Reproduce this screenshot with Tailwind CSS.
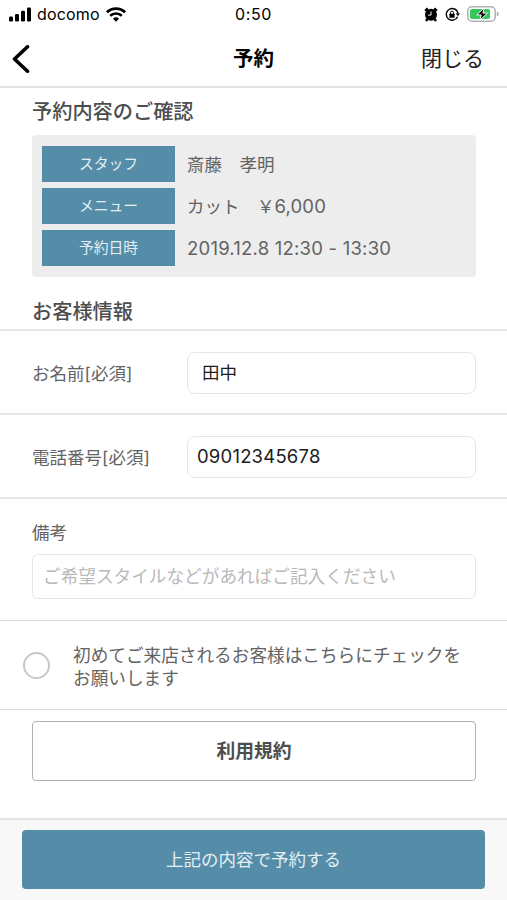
<!DOCTYPE html>
<html lang="ja">
<head>
<meta charset="utf-8">
<title>予約</title>
<script src="https://cdn.jsdelivr.net/npm/@tailwindcss/browser@4"></script>
</head>
<body class="w-[507px] h-[900px] overflow-hidden bg-white text-[#636363] font-[Inter,'Noto_Sans_CJK_JP',sans-serif] text-[17.5px] leading-6 flex flex-col">
  <div class="h-7 shrink-0 grid grid-cols-[1fr_auto_1fr] items-center text-black px-2 text-[16px] leading-7">
    <div class="flex items-center">
      <svg class="w-6 h-4" viewBox="0 0 24 16"><rect x="1" y="10.5" width="4" height="5" rx="1.2"/><rect x="7" y="8" width="4" height="7.5" rx="1.2"/><rect x="13" y="4.8" width="4" height="10.7" rx="1.2"/><rect x="19" y="1.5" width="4" height="14" rx="1.2"/></svg>
      <span class="ml-[5px] tracking-[0.15px]">docomo</span>
      <svg class="w-5 h-[15px] ml-[6px]" viewBox="0 0 20 15" fill="none" stroke="#000" stroke-width="2.6"><path d="M.9 5.3a13 13 0 0 1 18.2 0M4.2 8.8a8.3 8.3 0 0 1 11.6 0"/><path d="M10 14.7 7 11.8a4.3 4.3 0 0 1 6 0Z" fill="#000" stroke="none"/></svg>
    </div>
    <span class="tracking-[0.6px]">0:50</span>
    <div class="flex items-center justify-end">
      <svg class="w-[14px] h-[15px]" viewBox="0 0 14 15"><circle cx="7" cy="7.7" r="6"/><path d="M1.2 3.8 3.8 1.3M12.8 3.8l-2.6-2.5M3.4 12 2 14M10.6 12l1.4 2" stroke="#000" stroke-width="2.4"/><path d="M7 4.5v3.6H4.2" fill="none" stroke="#fff" stroke-width="1"/></svg>
      <svg class="w-[15px] h-[15px] ml-[7px]" viewBox="0 0 15 15"><path d="M12.6 9.8A5.9 5.9 0 1 1 13 6.2" fill="none" stroke="#000" stroke-width="1.4"/><path d="M10.7 6.2h4.2l-2 3z"/><rect x="4.4" y="6.7" width="5.2" height="4" rx=".5"/><path d="M5.4 7V5.8a1.6 1.6 0 0 1 3.2 0V7" fill="none" stroke="#000"/></svg>
      <svg class="w-8 h-4 ml-[7px]" viewBox="0 0 32 16"><rect x=".8" y=".8" width="27.4" height="14.4" rx="4.2" fill="#fff" stroke="#b0b0b0" stroke-width="1.5"/><rect x="3" y="3" width="20" height="10" rx="2" fill="#35c759"/><path d="M29.8 5.5v5q2-.8 2-2.5t-2-2.5" fill="#b0b0b0"/><path d="M17.2 1.8 9.8 8.9h4.4l-1.5 5.4 7.8-7.2h-4.6z" stroke="#fff" stroke-width="1"/></svg>
    </div>
  </div>
  <header class="h-[60px] shrink-0 border-b-2 border-[#e3e3e3] grid grid-cols-[1fr_auto_1fr] items-center text-black px-3 pt-[3px]">
    <svg class="w-[18px] h-7" viewBox="0 0 18 28" fill="none" stroke="#000" stroke-width="3.6" stroke-linecap="round" stroke-linejoin="round"><path d="M15.5 1.8 2.5 14 15.5 26.2"/></svg>
    <h1 class="text-[20.5px] font-bold">予約</h1>
    <span class="text-[21px] text-right text-[#222] pr-[11px]">閉じる</span>
  </header>
  <main class="flex flex-col">
    <h2 class="pl-8 h-[47px] leading-[48px] text-[20.2px] font-medium text-[#4d4d4d]">予約内容のご確認</h2>
    <dl class="ml-8 mr-[31px] h-[142px] rounded bg-[#ededed] pl-[10px] pt-[11px] grid grid-cols-[133px_1fr] auto-rows-[36px] gap-y-[6px] gap-x-3 items-center">
      <dt class="h-9 bg-[#558da8] text-[#e3eff4] text-[14.8px] leading-[37px] text-center">スタッフ</dt><dd class="pt-0.5">斎藤　孝明</dd>
      <dt class="h-9 bg-[#558da8] text-[#e3eff4] text-[14.8px] leading-[37px] text-center">メニュー</dt><dd>カット　￥<span class="text-[18.5px] tracking-[0.15px]">6,000</span></dd>
      <dt class="h-9 bg-[#558da8] text-[#e3eff4] text-[14.8px] leading-[37px] text-center">予約日時</dt><dd class="text-[18.5px] tracking-[0.22px]">2019.12.8 12:30 - 13:30</dd>
    </dl>
    <h2 class="pl-8 h-[54px] leading-[70px] border-b-2 border-[#e6e6e6] text-[20.2px] font-medium text-[#4d4d4d]">お客様情報</h2>
    <div class="h-[84px] border-b-2 border-[#e6e6e6] pl-8 pr-[31px] pt-0.5 flex items-center">
      <span class="w-[155px] pt-0.5">お名前[必須]</span>
      <div class="flex-1 h-[42px] border-[1.5px] border-[#e6e6e6] rounded-lg pl-[14px] leading-10 text-[#1c1c1c]">田中</div>
    </div>
    <div class="h-[84px] border-b-2 border-[#e6e6e6] pl-8 pr-[31px] pt-0.5 flex items-center">
      <span class="w-[155px] pt-0.5">電話番号[必須]</span>
      <div class="flex-1 h-[42px] border-[1.5px] border-[#e6e6e6] rounded-lg pl-[9px] leading-[38px] text-[18.5px] tracking-[0.2px] text-[#1c1c1c]">09012345678</div>
    </div>
    <div class="h-[122px] border-b border-[#dcdcdc] pl-8 pr-[31px] pt-[22px]">
      <div class="h-[33px]">備考</div>
      <div class="h-[45px] border-[1.5px] border-[#e6e6e6] rounded-md pl-[10px] leading-[44px] text-[17.65px] text-[#b9b9b9]">ご希望スタイルなどがあればご記入ください</div>
    </div>
    <div class="h-[89px] border-b border-[#dcdcdc] pl-[23px] flex items-center">
      <div class="size-[27px] rounded-full border-2 border-[#c8c8c8]"></div>
      <p class="ml-[23px] pt-[3px] text-[17.65px] leading-[23px] whitespace-nowrap">初めてご来店されるお客様はこちらにチェックを<br>お願いします</p>
    </div>
    <div class="h-[108px] pt-[11px] pl-8 pr-[31px]">
      <div class="h-[60px] border-[1.5px] border-[#b0b0b0] rounded text-center leading-[60px] text-[18.8px] font-bold text-[#4d4d4d]">利用規約</div>
    </div>
  </main>
  <footer class="flex-1 border-t-2 border-[#e4e4e4] bg-[#f8f8f8] pt-[10px] px-[22px]">
    <div class="h-[59px] rounded bg-[#558da8] text-center leading-[60px] text-[17.5px] text-[#e3eff4]">上記の内容で予約する</div>
  </footer>
</body>
</html>
